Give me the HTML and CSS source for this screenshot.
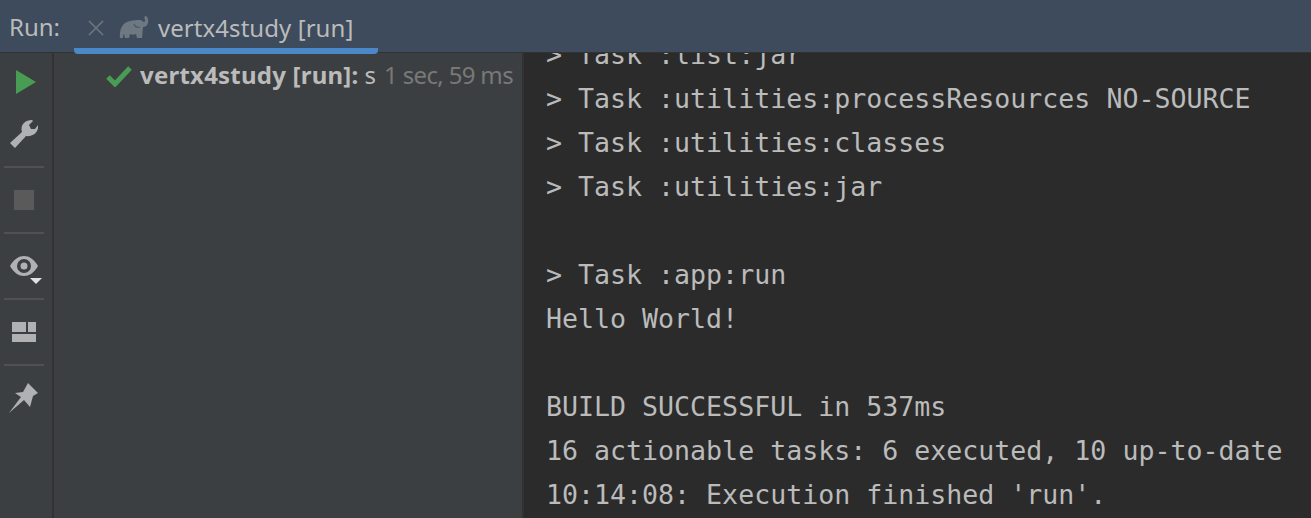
FILE: index.html
```html
<!DOCTYPE html>
<html lang="en">
<head>
<meta charset="utf-8">
<title>Run: vertx4study [run]</title>
<link rel="stylesheet" href="styles.css">
</head>
<body>
<div class="window">
  <header class="tabbar">
    <span class="run-label">Run:</span>
    <div class="tab">
      <svg class="tab-close" width="18" height="18" viewBox="0 0 18 18"><path d="M2 2l14 14M16 2L2 16" stroke="#6e7680" stroke-width="1.6" fill="none"/></svg>
      <svg class="tab-icon" width="30" height="23" viewBox="0 0 30 23"><path d="M1 23C0 14 4 7 11 6c4-1 7-1 10-1 2 0 3 2 4 2s1.500-2 .5-3.500C25 2.500 25.500 1 27 1c2 1 2.500 4 2 7-1 3-3 4-5 4l-1 11h-5l-1-4c-2 1-4 1-6 0l-1 4H6l-1-4c-1 1-1 2-1 4z" fill="#6e7883"/><path d="M15 9c1 3 3 4 6 3" stroke="#4f5a67" stroke-width="1.200" fill="none"/></svg>
      <span class="tab-title">vertx4study [run]</span>
    </div>
  </header>
  <main class="panels">
    <nav class="toolbar">
      <div class="slot"><svg width="20" height="24" viewBox="0 0 20 24"><path d="M0 0l20 12L0 24z" fill="#499c54"/></svg></div>
      <div class="slot slot-last"><svg width="28" height="28" viewBox="0 0 28 28"><path d="M0 23l12-11C10 6 14 0 22 0l1 1-4 4 2 4h4l3-4c1 7-5 12-12 11L5 28z" fill="#afb1b3"/></svg></div>
      <hr class="sep">
      <div class="slot-wide"><span class="stop"></span></div>
      <hr class="sep">
      <div class="slot-wide"><svg class="eye" width="32" height="28" viewBox="0 0 32 28"><path fill-rule="evenodd" d="M0 10C4 3 9 0 14 0s10 3 14 10c-4 7-9 10-14 10S4 17 0 10zm14-7a7 7 0 1 0 0 14 7 7 0 0 0 0-14zm0 3.500a3.500 3.500 0 1 1 0 7 3.500 3.500 0 0 1 0-7z" fill="#afb1b3"/><path d="M20 22h12l-6 6z" fill="#dfe1e3"/></svg></div>
      <hr class="sep">
      <div class="slot-wide"><div class="layout-icon"><span></span><span></span><span class="wide"></span></div></div>
      <hr class="sep">
      <div class="slot-wide"><svg width="30" height="30" viewBox="0 0 30 30"><path d="M19 0l10 10-5 3-3 11-6-7L0 30l12-16-6-4 8-1z" fill="#afb1b3"/></svg></div>
    </nav>
    <aside class="tree">
      <div class="tree-row">
        <svg class="check" width="26" height="22" viewBox="0 0 26 22"><path d="M2 12l7 7L24 3" stroke="#499c54" stroke-width="5" fill="none"/></svg>
        <span class="tree-name">vertx4study [run]:</span>
        <span class="tree-status">s</span>
        <span class="tree-time">1 sec, 59 ms</span>
      </div>
    </aside>
    <section class="console">
      <div class="line">&gt; Task :list:jar</div>
      <div class="line">&gt; Task :utilities:processResources NO-SOURCE</div>
      <div class="line">&gt; Task :utilities:classes</div>
      <div class="line">&gt; Task :utilities:jar</div>
      <div class="line">&nbsp;</div>
      <div class="line">&gt; Task :app:run</div>
      <div class="line">Hello World!</div>
      <div class="line">&nbsp;</div>
      <div class="line">BUILD SUCCESSFUL in 537ms</div>
      <div class="line">16 actionable tasks: 6 executed, 10 up-to-date</div>
      <div class="line">10:14:08: Execution finished 'run'.</div>
    </section>
  </main>
</div>
</body>
</html>
```
FILE: styles.css
```css
* { box-sizing: border-box; }
html, body { margin: 0; height: 100%; overflow: hidden; }
body { background: #2b2b2b; font-family: "Noto Sans", "Open Sans", sans-serif; }
.window { display: flex; flex-direction: column; height: 518px; }
.tabbar {
  flex: none; height: 53px; background: #3d4b5c; border-bottom: 1px solid #323232;
  display: flex; align-items: stretch; color: #bbbbbb; font-size: 24px;
}
.run-label { padding: 8px 0 0 9px; width: 74px; line-height: 38px; }
.tab {
  width: 304px; height: 54px; display: flex; align-items: flex-start; padding: 10px 0 0 13px;
  border-bottom: 6px solid #4a88c7; border-radius: 0 0 4px 4px; flex: none; position: relative;
}
.tab-close { margin-top: 9px; }
.tab-icon { margin: 5px 0 0 14px; }
.tab-title { margin-left: 9px; line-height: 36px; letter-spacing: 0.06px; }
.panels { flex: 1; display: flex; min-height: 0; }
.toolbar {
  flex: none; width: 54px; background: #3c3f41; border-right: 2px solid #323232;
  display: flex; flex-direction: column; align-items: stretch; padding: 3px 8px 0 4px;
}
.slot { height: 52px; flex: none; display: flex; align-items: center; justify-content: center; }
.slot-last { margin-bottom: 6px; }
.slot-wide { height: 64px; flex: none; display: flex; align-items: center; justify-content: center; }
.slot svg, .slot-wide svg { display: block; }
.slot:first-child svg { margin-left: 4px; }
.eye { margin: 8px 0 0 4px; }
.sep { width: 40px; height: 2px; background: #515151; border: 0; margin: 0; flex: none; }
.stop { width: 20px; height: 20px; background: #5a5a5a; }
.layout-icon { display: grid; grid-template-columns: 14px 8px; gap: 2px; width: 24px; }
.layout-icon span { height: 10px; background: #afb1b3; }
.layout-icon .wide { grid-column: 1 / 3; height: 8px; }
.tree {
  flex: none; width: 470px; background: #3c3f41; border-right: 2px solid #323232; padding: 4px 0 0 52px;
}
.tree-row { display: flex; align-items: center; height: 34px; font-size: 24px; white-space: nowrap; }
.check { margin-top: 4px; }
.tree-name { margin-left: 8px; font-weight: 700; color: #bbbbbb; letter-spacing: 0.22px; }
.tree-status { margin-left: 6px; color: #bbbbbb; }
.tree-time { margin-left: 8px; color: #787878; letter-spacing: -0.65px; }
.console {
  flex: 1; min-width: 0; overflow: hidden; display: flex; flex-direction: column; justify-content: flex-end;
  padding: 0 0 1px 22px; font-family: "DejaVu Sans Mono", monospace; font-size: 26.6px; color: #bbbbbb;
}
.line { flex: none; height: 44px; line-height: 44px; white-space: pre; }
```
